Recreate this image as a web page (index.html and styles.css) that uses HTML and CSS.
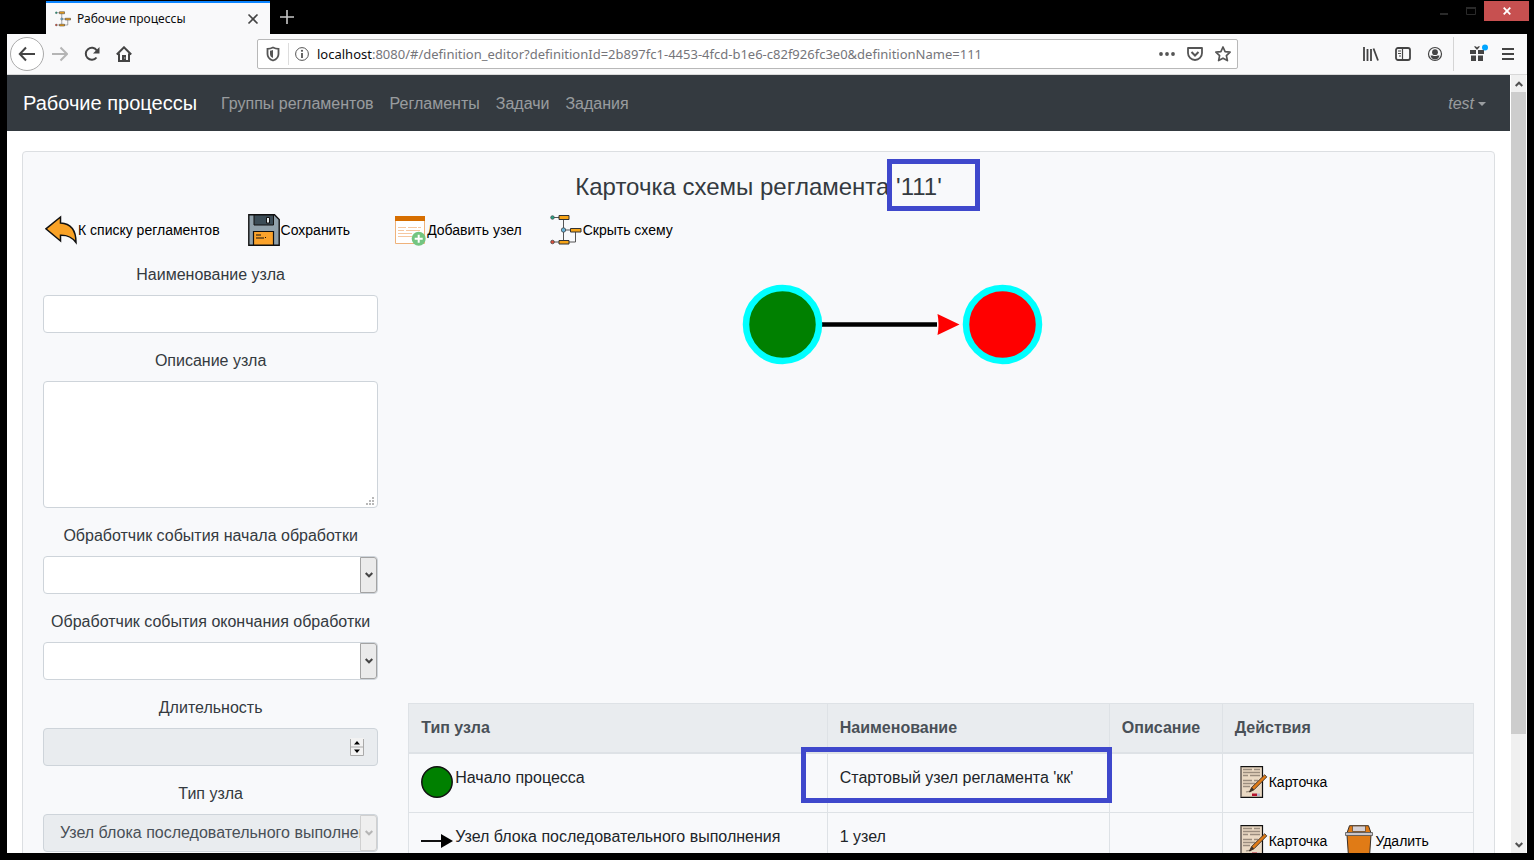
FILE: index.html
```html
<!DOCTYPE html>
<html lang="ru">
<head>
<meta charset="utf-8">
<title>Рабочие процессы</title>
<link rel="stylesheet" href="styles.css">
</head>
<body>
<svg class="defs" aria-hidden="true">
  <symbol id="scheme" viewBox="0 0 32 32">
    <path d="M4 3.500H9M13.500 5v22M15 16h6M25.500 18v10H18M4 28h5" fill="none" stroke="#555"/>
    <circle cx="2.500" cy="3.500" r="1.800" fill="#27a385" stroke="#444" stroke-width=".7"/>
    <circle cx="13.500" cy="16" r="2.200" fill="#6bb6dc" stroke="#333" stroke-width=".7"/>
    <circle cx="2.500" cy="28" r="1.800" fill="#e0523d" stroke="#333" stroke-width=".7"/>
    <path d="M9 1.500h10v4H9zM20.500 14.500h10.500v3.500H20.500zM9 26.500h10v3.500H9z" fill="#f6a417" stroke="#333"/>
  </symbol>
  <symbol id="card" viewBox="0 0 28 32">
    <path d="M1 .7h21.500v30.600H1z" fill="#ead9c3" stroke="#111" stroke-width="1.200"/>
    <path d="M.9 1v30" stroke="#8d8279" stroke-width="1.600"/>
    <path d="M3 3.500h9M14 3.500h6M3 6.500h17M3 9.500h5M10 9.500h10M3 14.500h9M14 14.500h4M3 17.500h12M3 20.500h7M6 26q3-1 5-.5" fill="none" stroke="#9b8d7e" stroke-width="1.300"/>
    <path d="M12 27.500h5v2.500h-5z" fill="#b5122e"/><path d="M17 27.500h3v2.500h-3z" fill="#b8b5cc"/>
    <path d="M9.500 26l2.300-4.700L24.700 8.800l2.100 2.100L14 23.800z" fill="#e07b16" stroke="#3a3028" stroke-width=".9"/>
    <path d="M9.500 26l2.300-4.700 2.200 2.300z" fill="#3a3028"/>
  </symbol>
  <symbol id="chev" viewBox="0 0 8 8"><path d="M.7 2l3.300 3.300L7.300 2" fill="none" stroke="currentColor" stroke-width="2"/></symbol>
</svg>

<header class="titlebar">
  <div class="tab">
    <svg class="fav"><use href="#scheme"/></svg>
    <span class="tab-title">Рабочие процессы</span>
    <button class="plain" aria-label="Закрыть вкладку"><svg width="12" height="12" viewBox="0 0 12 12"><path d="M1.500 1.500l9 9m0-9l-9 9" stroke="#444" stroke-width="1.600"/></svg></button>
  </div>
  <button class="plain newtab" aria-label="Новая вкладка"><svg width="14" height="14" viewBox="0 0 14 14"><path d="M7 0v14M0 7h14" stroke="#c8c8c8" stroke-width="1.600"/></svg></button>
  <div class="window-buttons">
    <button class="plain win" aria-label="Свернуть"><svg width="10" height="12" viewBox="0 0 10 12"><path d="M1 9h8" stroke="#2a2a2a" stroke-width="2"/></svg></button>
    <button class="plain win" aria-label="Развернуть"><svg width="10" height="8" viewBox="0 0 10 8"><path d="M.5 1h9v6.500h-9z" fill="none" stroke="#2a2a2a"/><path d="M0 1h10" stroke="#2a2a2a" stroke-width="2"/></svg></button>
    <button class="plain close" aria-label="Закрыть"><svg width="8" height="8" viewBox="0 0 8 8"><path d="M.7.7l6.600 6.600m0-6.600L.7 7.300" stroke="#fff" stroke-width="1.800"/></svg></button>
  </div>
</header>

<div class="toolbar">
  <div class="tools left">
    <button class="plain back" aria-label="Назад"><svg width="18" height="16" viewBox="0 0 18 16"><path d="M8 1.500L1.800 8 8 14.500M2 8h15" fill="none" stroke="#444" stroke-width="2"/></svg></button>
    <button class="plain" aria-label="Вперёд"><svg width="16" height="16" viewBox="0 0 16 16"><path d="M8.500 1.500L15 8l-6.500 6.500M15 8H0" fill="none" stroke="#b5b5b5" stroke-width="2"/></svg></button>
    <button class="plain" aria-label="Обновить"><svg width="16" height="16" viewBox="0 0 16 16"><path d="M12.500 11.500a6 6 0 1 1 .3-7" fill="none" stroke="#444" stroke-width="2"/><path d="M15.500 1v6.500H9z" fill="#444"/></svg></button>
    <button class="plain" aria-label="Домой"><svg width="16" height="16" viewBox="0 0 16 16"><path d="M.8 8.500L8 1.300l7.200 7.200M3 7.500v7.500h10V7.500" fill="none" stroke="#444" stroke-width="2"/><path d="M6 9h4v6H6z" fill="#444"/><path d="M8.300 11.500h1v1h-1z" fill="#fff"/></svg></button>
  </div>
  <div class="urlbar">
    <svg width="14" height="16" viewBox="0 0 14 16"><path d="M7 1.500C5 2.500 3 2.800 1.500 2.800V8c0 3.500 2.500 5.500 5.500 6.500 3-1 5.500-3 5.500-6.500V2.800C11 2.800 9 2.500 7 1.500z" fill="none" stroke="#555" stroke-width="1.800"/><path d="M7 4v8C5 11 4 10 4 8V4.800C5 4.700 6 4.500 7 4z" fill="#555"/></svg>
    <span class="url-sep"></span>
    <svg width="14" height="14" viewBox="0 0 14 14"><circle cx="7" cy="7" r="6.400" fill="none" stroke="#555"/><path d="M7 6v5" stroke="#555" stroke-width="1.800"/><circle cx="7" cy="3.800" r="1.100" fill="#555"/></svg>
    <div class="url" role="textbox" contenteditable="true" spellcheck="false" aria-label="Адрес"><span class="host">localhost</span>:8080/#/definition_editor?definitionId=2b897fc1-4453-4fcd-b1e6-c82f926fc3e0&amp;definitionName=111</div>
    <button class="plain" aria-label="Действия"><svg width="16" height="16" viewBox="0 0 16 16"><g fill="#555"><circle cx="2" cy="8" r="1.900"/><circle cx="8" cy="8" r="1.900"/><circle cx="14" cy="8" r="1.900"/></g></svg></button>
    <button class="plain" aria-label="Pocket"><svg width="16" height="14" viewBox="0 0 16 14"><path d="M1 1h14v5a7 7 0 0 1-14 0z" fill="none" stroke="#555" stroke-width="1.800" stroke-linejoin="round"/><path d="M4.500 5L8 8.500 11.500 5" fill="none" stroke="#555" stroke-width="2"/></svg></button>
    <button class="plain" aria-label="В закладки"><svg width="16" height="16" viewBox="0 0 16 16"><path d="M8 1l2.100 4.600 5 .6-3.700 3.400 1 5L8 12.200l-4.400 2.400 1-5L.9 6.200l5-.6z" fill="none" stroke="#555" stroke-width="1.700" stroke-linejoin="round"/></svg></button>
  </div>
  <div class="tools right">
    <button class="plain" aria-label="Библиотека"><svg width="16" height="14" viewBox="0 0 16 14"><path d="M1 0v14M4.500 2v12M8 2v12" stroke="#444" stroke-width="1.800"/><path d="M10.500 1.500L15 13.500" stroke="#444" stroke-width="1.800"/></svg></button>
    <button class="plain" aria-label="Боковая панель"><svg width="16" height="14" viewBox="0 0 16 14"><rect x="1" y="1" width="14" height="12" rx="2" fill="none" stroke="#444" stroke-width="1.800"/><path d="M7.500 1v12M3 4h3M3 6.500h3M4 9h2" stroke="#444" stroke-width="1.200"/></svg></button>
    <button class="plain" aria-label="Аккаунт"><svg width="16" height="16" viewBox="0 0 16 16"><circle cx="8" cy="8" r="6.500" fill="none" stroke="#444" stroke-width="1.200"/><circle cx="8" cy="6.200" r="2.900" fill="#444"/><path d="M3.500 9.500h2.200q2.300 1.200 4.600 0h2.200q-1 4-4.500 4t-4.500-4z" fill="#444"/></svg></button>
    <span class="tool-sep"></span>
    <button class="plain gift" aria-label="Что нового"><svg width="20" height="20" viewBox="0 0 20 20"><path d="M2 6h6v4H2zM10 6h6v4h-6zM3 11.500h5V17H3zM10 11.500h5V17h-5zM6 2.500q1.500-1 3 1 1.500-2 3-1L9.500 5.500h-1z" fill="#444"/><circle cx="17" cy="3.500" r="3" fill="#00a5ff"/></svg></button>
    <button class="plain" aria-label="Меню"><svg width="12" height="12" viewBox="0 0 12 12"><path d="M0 1h12M0 6h12M0 11h12" stroke="#444" stroke-width="2"/></svg></button>
  </div>
</div>

<div class="viewport">
  <div class="page">
    <nav class="navbar">
      <a class="brand" href="#">Рабочие процессы</a>
      <a href="#">Группы регламентов</a>
      <a href="#">Регламенты</a>
      <a href="#">Задачи</a>
      <a href="#">Задания</a>
      <a class="user" href="#"><em>test</em></a>
    </nav>
    <main class="card">
      <h1>Карточка схемы регламента <span class="mark-host">'111'<span class="mark mark-title"></span></span></h1>
      <div class="actions">
        <button class="action"><svg width="32" height="32" viewBox="0 0 32 32"><path d="M.9 14.800L15.500 3v6C25 9.500 31 15 31 28.500 27 23 23 21 15.500 21.200V27z" fill="#f9a226" stroke="#111" stroke-width="1.500"/></svg>К списку регламентов</button>
        <button class="action save"><svg width="32" height="32" viewBox="0 0 32 32"><path d="M.8.8h25.700l4.700 4.700v25.700H.8z" fill="#90a1ab" stroke="#111" stroke-width="1.400"/><path d="M6 1h19.500v10H6z" fill="#3c4d57" stroke="#111"/><path d="M18.500 3.500h3V9h-3z" fill="#e8eef0" stroke="#111"/><path d="M5.500 17.500h20V31h-20z" fill="#fba32b" stroke="#111" stroke-width="1.200"/><path d="M8 21h5M8 24h8M17 23.500h1" stroke="#111"/></svg>Сохранить</button>
        <button class="action"><svg width="32" height="32" viewBox="0 0 32 32"><path d="M1.500 2.500h29v27h-29z" fill="#fff" stroke="#efb27a"/><path d="M1 2h30v5H1z" fill="#d66e00"/><path d="M4 13.500h8M14 13.500h9M24 13.500h3M4 16.500h6M12 16.500h14M4 19.500h14M4 22.500h14" stroke="#f5c7a0"/><circle cx="24.700" cy="24.700" r="7" fill="#73c581"/><path d="M24.700 20.700v8M20.700 24.700h8" stroke="#fff" stroke-width="2"/></svg>Добавить узел</button>
        <button class="action"><svg width="32" height="32"><use href="#scheme"/></svg>Скрыть схему</button>
      </div>
      <div class="row">
        <form class="col-form">
          <div class="group">
            <label for="name">Наименование узла</label>
            <input class="control" id="name" type="text">
          </div>
          <div class="group">
            <label for="desc">Описание узла</label>
            <div class="field">
              <textarea class="control area" id="desc"></textarea>
              <svg class="grip" width="8" height="8" viewBox="0 0 8 8"><path d="M6 0h2v2H6zM3 3h2v2H3zM6 3h2v2H6zM0 6h2v2H0zM3 6h2v2H3zM6 6h2v2H6z" fill="#b8b8b8"/></svg>
            </div>
          </div>
          <div class="group">
            <label for="onstart">Обработчик события начала обработки</label>
            <div class="field">
              <select class="control" id="onstart"><option></option></select>
              <span class="drop"><svg width="8" height="8"><use href="#chev"/></svg></span>
            </div>
          </div>
          <div class="group">
            <label for="onend">Обработчик события окончания обработки</label>
            <div class="field">
              <select class="control" id="onend"><option></option></select>
              <span class="drop"><svg width="8" height="8"><use href="#chev"/></svg></span>
            </div>
          </div>
          <div class="group">
            <label for="duration">Длительность</label>
            <div class="field">
              <input class="control" id="duration" type="number" disabled>
              <svg class="spin" width="14" height="18" viewBox="0 0 14 18"><path d="M0 0h14v18H0z" fill="#f2f2f2"/><path d="M.5 1v16.500h13V1M0 9h14" fill="none" stroke="#aaa"/><path d="M4 6.500L7 3l3 3.500zM4 11.500h6L7 15z" fill="#000"/></svg>
            </div>
          </div>
          <div class="group">
            <label for="type">Тип узла</label>
            <div class="field">
              <select class="control" id="type" disabled><option>Узел блока последовательного выполнения</option></select>
              <span class="drop off"><svg width="8" height="8"><use href="#chev"/></svg></span>
            </div>
          </div>
        </form>
        <section class="col-main">
          <svg class="diagram" width="660" height="441">
            <path d="M414 62.500h115" stroke="#000" stroke-width="4.500"/>
            <path d="M529.500 52l22 10.500-22 10.500q2-10.500 0-21z" fill="#f00"/>
            <circle cx="374.500" cy="62.500" r="36.500" fill="green" stroke="#0ff" stroke-width="6.500"/>
            <circle cx="594.500" cy="62.500" r="36.500" fill="red" stroke="#0ff" stroke-width="6.500"/>
          </svg>
          <table>
            <colgroup><col class="c-type"><col class="c-name"><col class="c-desc"><col></colgroup>
            <thead><tr><th>Тип узла</th><th>Наименование</th><th>Описание</th><th>Действия</th></tr></thead>
            <tbody>
              <tr>
                <td><div class="node"><svg width="32" height="32" viewBox="0 0 32 32"><circle cx="16" cy="16" r="15.200" fill="green" stroke="#111" stroke-width="1.500"/></svg>Начало процесса</div></td>
                <td class="mark-host">Стартовый узел регламента 'кк'<span class="mark mark-cell"></span></td>
                <td></td>
                <td><div class="cell-actions"><button class="action"><svg width="28" height="32"><use href="#card"/></svg>Карточка</button></div></td>
              </tr>
              <tr>
                <td><div class="node"><svg width="32" height="32" viewBox="0 0 32 32"><path d="M0 16h22" stroke="#111" stroke-width="2"/><path d="M20 9l12 7-12 7z"/></svg>Узел блока последовательного выполнения</div></td>
                <td>1 узел</td>
                <td></td>
                <td><div class="cell-actions"><button class="action"><svg width="28" height="32"><use href="#card"/></svg>Карточка</button><button class="action"><svg class="bin" width="28" height="32" viewBox="0 0 28 32"><path d="M2 10h24l-1.500 21.500h-21z" fill="#e07b16" stroke="#3a3028"/><path d="M4.500.7h19L26 8H2z" fill="#e07b16" stroke="#3a3028"/><path d="M7.500 1h13v5.500h-13z" fill="#d5d0d5" stroke="#6b4a2a" stroke-width=".8"/><path d="M.5 7.500h27v3H.5z" fill="#c9c5c9" stroke="#555" stroke-width=".8"/></svg>Удалить</button></div></td>
              </tr>
            </tbody>
          </table>
        </section>
      </div>
    </main>
  </div>
  <div class="scrollbar" aria-hidden="true">
    <svg class="up" width="8" height="8"><use href="#chev"/></svg>
    <span class="thumb"></span>
    <svg class="down" width="8" height="8"><use href="#chev"/></svg>
  </div>
</div>
</body>
</html>
```

FILE: styles.css
```css
* { box-sizing: border-box; }
body {
  margin: 0;
  height: 100vh;
  padding: 0 7px 7px;
  display: flex;
  flex-direction: column;
  background: #000;
  color: #212529;
  font: 16px/24px "Liberation Sans", Arial, sans-serif;
  overflow: hidden;
}
svg { display: block; flex: none; }
a { text-decoration: none; }
.defs { position: absolute; width: 0; height: 0; }
.plain {
  display: flex;
  align-items: center;
  justify-content: center;
  padding: 0;
  border: 0;
  background: none;
}

/* Browser window */
.titlebar { display: flex; flex: none; height: 34px; padding-left: 39px; }
.tab {
  display: flex;
  align-items: center;
  width: 224px;
  padding: 0 11px 0 9px;
  margin-top: 1px;
  border-top: 2px solid #0a84ff;
  background: #f9f9fa;
  color: #0c0c0d;
  font: 12px/16px "Noto Sans", "Open Sans", sans-serif;
}
.fav { width: 16px; height: 16px; margin-right: 6px; }
.tab-title { flex: 1; white-space: nowrap; }
.newtab { width: 34px; }
.window-buttons { display: flex; align-items: flex-start; margin-left: auto; padding: 1px 0 0; margin-right: -2px; }
.win { width: 27px; height: 20px; }
.close { width: 45px; height: 20px; background: #c75050; }
.toolbar {
  display: flex;
  flex: none;
  align-items: center;
  height: 41px;
  padding: 0 13px 0 3px;
  border-bottom: 1px solid #d8d8d8;
  background: #f9f9fa;
}
.tools { display: flex; align-items: center; gap: 16px; }
.back { width: 34px; height: 34px; border: 1px solid #aaa; border-radius: 50%; background: #fff; margin-right: -8px; }
.left { width: 247px; }
.urlbar {
  display: flex;
  align-items: center;
  width: 981px;
  height: 30px;
  padding: 0 6px 0 8px;
  gap: 8px;
  border: 1px solid #b8b8b8;
  border-radius: 2px;
  background: #fff;
}
.urlbar .plain { margin-left: 4px; }
.url-sep { width: 1px; height: 22px; background: #ddd; margin-right: -2px; }
.url {
  flex: 1;
  min-width: 0;
  overflow: hidden;
  color: #75757a;
  font: 13px/20px "Noto Sans", "Open Sans", sans-serif;
  white-space: nowrap;
}
.host { color: #0c0c0d; }
.right { margin-left: auto; }
.tool-sep { width: 1px; height: 34px; margin: 0 -2px 0 -6px; background: #d5d5d5; }
.gift { margin-right: -2px; }

/* Page area */
.viewport { display: flex; flex: 1; min-height: 0; overflow: hidden; background: #fff; }
.page { flex: 1; min-width: 0; }
.scrollbar {
  display: flex;
  flex-direction: column;
  align-items: center;
  width: 17px;
  padding-bottom: 4px;
  border: solid #fff;
  border-width: 0 1px;
  background: #f0f0f0;
  color: #505050;
}
.up { margin: 5px 0 4px; transform: rotate(180deg); }
.thumb { width: 100%; height: 83%; margin-bottom: auto; background: #cdcdcd; }
.navbar {
  display: flex;
  align-items: center;
  min-height: 56px;
  padding: 8px 16px;
  background: #343a40;
}
.navbar a { padding: 9px 8px 7px; color: rgba(255, 255, 255, .5); }
.navbar .brand { padding: 0; margin-right: 16px; color: #fff; font-size: 20px; }
.navbar .user { display: flex; align-items: center; gap: 4px; margin-left: auto; }
.user::after { content: ""; border: 4px solid transparent; border-top-color: currentColor; border-bottom: 0; }
.card {
  margin: 20px 15px;
  padding: 20px;
  border: 1px solid #dcdfe2;
  border-radius: 4px;
  background: #f8f9fb;
}
h1 {
  margin: 0 0 12px;
  color: #343a40;
  font-size: 24px;
  font-weight: 400;
  line-height: 30px;
  text-align: center;
}
.mark-host { position: relative; }
.mark { position: absolute; z-index: 1; border: 5px solid #3f48cc; }
.mark-title { inset: -14px -38px -11px -9px; }
.mark-cell { inset: -7px -3px 9px -27px; }
.actions { display: flex; gap: 28px; height: 48px; align-items: flex-start; padding: 0 2px; }
.action {
  display: flex;
  align-items: center;
  padding: 0;
  border: 0;
  background: none;
  color: #000;
  font: 14px/20px "Liberation Sans", Arial, sans-serif;
  white-space: nowrap;
}
.action svg { margin-right: 1px; }
.save { margin-right: 16px; }
.row { display: flex; margin: 0 -15px; }
.col-form { width: 25%; padding: 1px 15px 0; }
.col-main { width: 75%; padding: 0 15px; }
.group { margin-bottom: 16px; }
label { display: block; margin-bottom: 8px; color: #343a40; text-align: center; }
.field { position: relative; }
.control {
  display: block;
  width: 100%;
  height: 38px;
  padding: 6px 12px;
  border: 1px solid #ced4da;
  border-radius: 4px;
  background: #fff;
  color: #495057;
  font: inherit;
  appearance: none;
}
.area { height: 127px; resize: none; }
select.control { padding: 6px 17px 6px 16px; }
.control:disabled { background: #e9ecef; opacity: 1; }
.grip { position: absolute; right: 4px; bottom: 3px; }
.drop {
  position: absolute;
  inset: 1px 1px 1px auto;
  display: flex;
  align-items: center;
  justify-content: center;
  width: 17px;
  border: 1px solid #a3a3a3;
  border-radius: 0 3px 3px 0;
  background: #ebebeb;
  color: #444;
  pointer-events: none;
}
.drop.off { border-color: #d0d0d0; background: #efefef; color: #b5b5b5; }
.spin { position: absolute; top: 10px; right: 14px; pointer-events: none; }
.diagram { max-width: 100%; }
table { width: 100%; table-layout: fixed; border-collapse: collapse; }
.c-type { width: 39.3%; }
.c-name { width: 26.5%; }
.c-desc { width: 10.6%; }
th, td { padding: 12px; border: 1px solid #dee2e6; text-align: left; vertical-align: top; }
th { border-bottom-width: 2px; background: #e9ecef; color: #495057; }
td { padding-bottom: 14px; }
.node { display: flex; gap: 2px; white-space: nowrap; }
.cell-actions { display: flex; gap: 18px; padding-left: 5px; }
.cell-actions .bin { margin-right: 2px; }
```
